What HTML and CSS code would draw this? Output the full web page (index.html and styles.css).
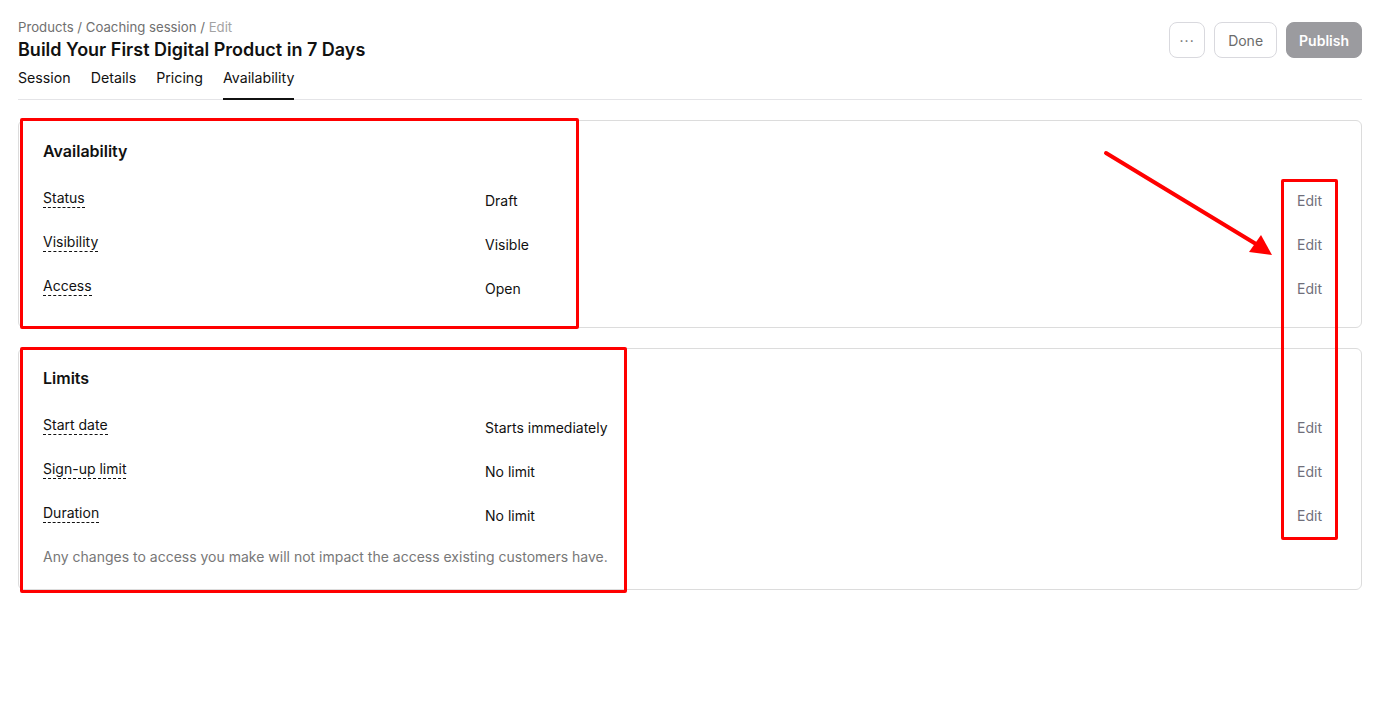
FILE: index.html
```html
<!DOCTYPE html>
<html lang="en">
<head>
  <meta charset="UTF-8">
  <meta name="viewport" content="width=device-width, initial-scale=1.0">
  <title>Availability - Build Your First Digital Product in 7 Days</title>
  <link rel="stylesheet" href="styles.css">
</head>
<body>
  <div class="page">
    <div class="header">
      <div class="header-left">
        <div class="crumbs">Products / Coaching session / <span class="crumb-current">Edit</span></div>
        <h1 class="title">Build Your First Digital Product in 7 Days</h1>
        <nav class="tabs">
          <a class="tab">Session</a>
          <a class="tab">Details</a>
          <a class="tab">Pricing</a>
          <a class="tab active">Availability</a>
        </nav>
      </div>
      <div class="actions">
        <button class="btn btn-icon">&middot;&middot;&middot;</button>
        <button class="btn">Done</button>
        <button class="btn btn-primary">Publish</button>
      </div>
    </div>

    <section class="card">
      <h2 class="card-title">Availability</h2>
      <div class="rows">
        <div class="row">
          <span class="label">Status</span>
          <span class="value">Draft</span>
          <button class="edit">Edit</button>
        </div>
        <div class="row">
          <span class="label">Visibility</span>
          <span class="value">Visible</span>
          <button class="edit">Edit</button>
        </div>
        <div class="row">
          <span class="label">Access</span>
          <span class="value">Open</span>
          <button class="edit">Edit</button>
        </div>
      </div>
    </section>

    <section class="card">
      <h2 class="card-title">Limits</h2>
      <div class="rows">
        <div class="row">
          <span class="label">Start date</span>
          <span class="value">Starts immediately</span>
          <button class="edit">Edit</button>
        </div>
        <div class="row">
          <span class="label">Sign-up limit</span>
          <span class="value">No limit</span>
          <button class="edit">Edit</button>
        </div>
        <div class="row">
          <span class="label">Duration</span>
          <span class="value">No limit</span>
          <button class="edit">Edit</button>
        </div>
      </div>
      <p class="note">Any changes to access you make will not impact the access existing customers have.</p>
    </section>
  </div>

  <!-- review annotations drawn over the page -->
  <div class="mark mark-1"></div>
  <div class="mark mark-2"></div>
  <div class="mark mark-3"></div>
  <svg class="arrow" width="1384" height="709" viewBox="0 0 1384 709">
    <line x1="1106" y1="153" x2="1256" y2="244" stroke="#ff0000" stroke-width="4" stroke-linecap="round"/>
    <polygon points="1272,255 1249,252 1261,235" fill="#ff0000"/>
  </svg>
</body>
</html>
```

FILE: styles.css
```css
body {
  margin: 0;
  font-family: Inter, "Noto Sans", Arial, sans-serif;
  font-size: 14px;
  color: #111;
  background: #fff;
}
.page {
  padding: 17px 22px 0 18px;
}
.header {
  display: flex;
  justify-content: space-between;
  align-items: flex-start;
  border-bottom: 1px solid #e4e4e7;
}
.crumbs {
  font-size: 13.2px;
  line-height: 20px;
  color: #707070;
}
.crumb-current {
  color: #a3a3a3;
}
.title {
  margin: 0;
  font-size: 18px;
  font-weight: 600;
  line-height: 26px;
}
.tabs {
  display: flex;
  gap: 20px;
  margin-top: 5px;
}
.tab {
  font-size: 14.2px;
  line-height: 20px;
  padding-bottom: 10px;
  border-bottom: 2px solid transparent;
  margin-bottom: -1px;
  color: #111;
}
.tab.active {
  border-bottom-color: #111;
}
.actions {
  display: flex;
  gap: 9px;
  margin-top: 5px;
}
.btn {
  height: 36px;
  padding: 0 13px;
  font-family: inherit;
  font-size: 14px;
  color: #6b6b6b;
  background: #fff;
  border: 1px solid #d9d9de;
  border-radius: 8px;
}
.btn-icon {
  width: 36px;
  padding: 0;
  letter-spacing: 1px;
}
.btn-primary {
  padding: 0 12px;
  color: #fff;
  font-weight: 600;
  background: #9b9b9f;
  border-color: #9b9b9f;
}
.card {
  margin-top: 20px;
  padding: 20px 24px 17px;
  border: 1px solid #dcdcdc;
  border-radius: 6px;
}
.card + .card {
  padding-top: 19px;
  padding-bottom: 22px;
}
.card-title {
  margin: 0 0 17px;
  font-size: 16px;
  font-weight: 600;
  line-height: 20px;
}
.row {
  display: grid;
  grid-template-columns: 442px 1fr auto;
  align-items: center;
  height: 44px;
}
.label {
  justify-self: start;
  line-height: 18px;
  margin-top: -3px;
  border-bottom: 1px dashed #111;
}
.value {
  color: #111;
}
.edit {
  padding: 0 15px;
  font-family: inherit;
  font-size: 14px;
  color: #6f6f7b;
  background: none;
  border: none;
}
.note {
  margin: 10px 0 0;
  line-height: 20px;
  color: #777;
}
.mark {
  position: absolute;
  border: 3px solid #ff0000;
  border-radius: 2px;
}
.mark-1 {
  left: 20px;
  top: 118px;
  width: 553px;
  height: 205px;
}
.mark-2 {
  left: 20px;
  top: 347px;
  width: 601px;
  height: 240px;
}
.mark-3 {
  left: 1281px;
  top: 179px;
  width: 51px;
  height: 355px;
}
.arrow {
  position: absolute;
  left: 0;
  top: 0;
  pointer-events: none;
}
```
